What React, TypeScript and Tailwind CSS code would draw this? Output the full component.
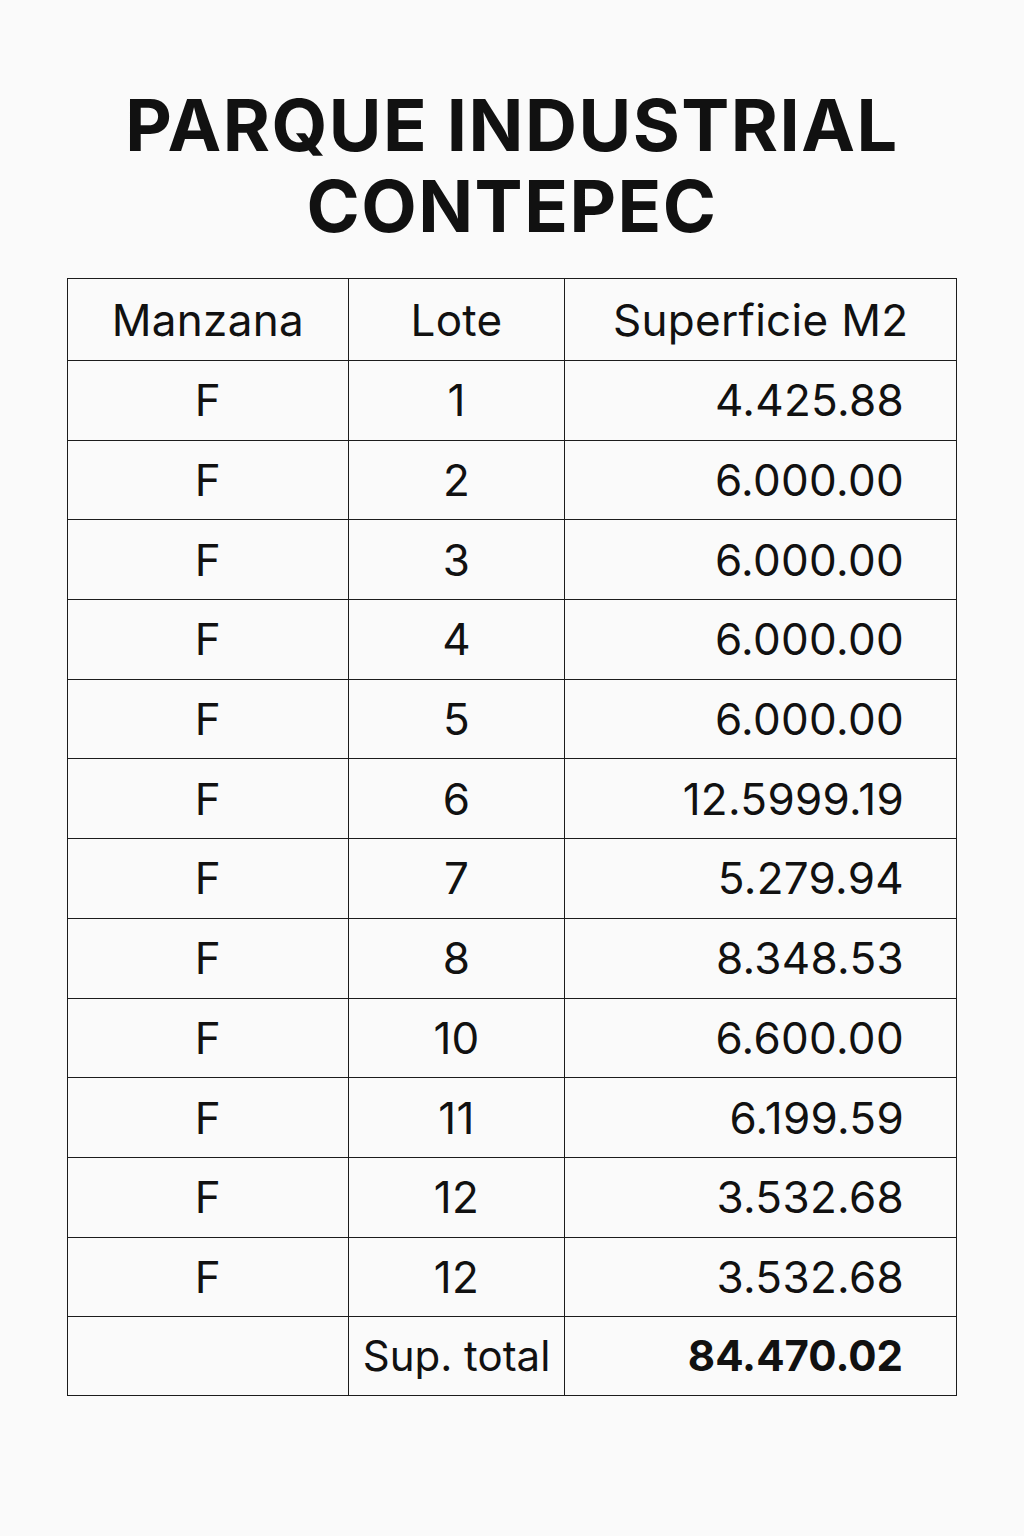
const rows: [string, string, string][] = [
  ['F', '1', '4.425.88'],
  ['F', '2', '6.000.00'],
  ['F', '3', '6.000.00'],
  ['F', '4', '6.000.00'],
  ['F', '5', '6.000.00'],
  ['F', '6', '12.5999.19'],
  ['F', '7', '5.279.94'],
  ['F', '8', '8.348.53'],
  ['F', '10', '6.600.00'],
  ['F', '11', '6.199.59'],
  ['F', '12', '3.532.68'],
  ['F', '12', '3.532.68'],
]

const cell = 'border-[1.5px] border-[#1c1c1c] px-0'

export default function App() {
  return (
    <div
      className="min-h-[1536px] w-[1024px] bg-[#fafafa] text-[#111] pt-[84px]"
      style={{ fontFamily: 'Inter, "Noto Sans", sans-serif' }}
    >
      <h1 className="text-center font-bold text-[72px] leading-[81px] tracking-[1.5px]">
        PARQUE INDUSTRIAL
        <br />
        CONTEPEC
      </h1>

      <table className="mt-[32px] ml-[67px] w-[890px] border-collapse text-[44px] leading-none tracking-[0.3px]">
        <colgroup>
          <col className="w-[281px]" />
          <col className="w-[217px]" />
          <col className="w-[392px]" />
        </colgroup>
        <thead>
          <tr className="h-[82px]">
            <th className={`${cell} font-normal text-center`}>Manzana</th>
            <th className={`${cell} font-normal text-center`}>Lote</th>
            <th className={`${cell} font-normal text-center`}>Superficie M2</th>
          </tr>
        </thead>
        <tbody>
          {rows.map(([m, l, s], i) => (
            <tr key={i} className="h-[79.7px]">
              <td className={`${cell} text-center`}>{m}</td>
              <td className={`${cell} text-center`}>{l}</td>
              <td className={`${cell} text-right pr-[52px]`}>{s}</td>
            </tr>
          ))}
          <tr className="h-[79px]">
            <td className={cell}></td>
            <td className={`${cell} text-center text-[42px] tracking-normal`}>Sup. total</td>
            <td className={`${cell} text-right pr-[53px] font-bold text-[42px] tracking-normal`}>84.470.02</td>
          </tr>
        </tbody>
      </table>
    </div>
  )
}
